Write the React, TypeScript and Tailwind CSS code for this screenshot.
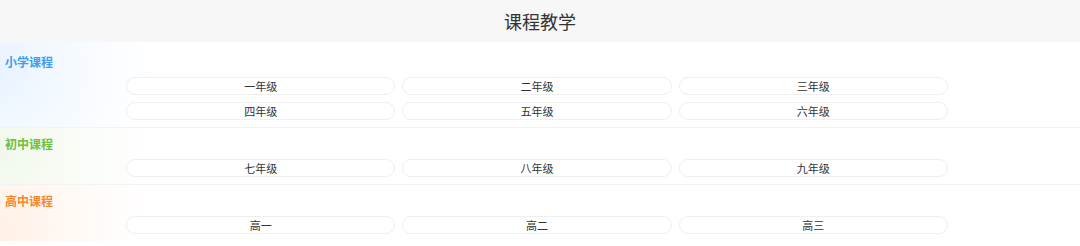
const sections = [
  {
    title: "小学课程",
    color: "text-[#3d9cf6]",
    glow: "bg-[radial-gradient(circle_at_0%_35%,#e8f3ff_0px,rgba(232,243,255,0.5)_60px,rgba(255,255,255,0)_150px)]",
    grades: ["一年级", "二年级", "三年级", "四年级", "五年级", "六年级"],
    top: "pt-[13px]",
  },
  {
    title: "初中课程",
    color: "text-[#6cbf3f]",
    glow: "bg-[radial-gradient(circle_at_0%_40%,#f0f8ea_0px,rgba(240,248,234,0.5)_60px,rgba(255,255,255,0)_150px)]",
    grades: ["七年级", "八年级", "九年级"],
    top: "pt-[9px]",
  },
  {
    title: "高中课程",
    color: "text-[#f7872a]",
    glow: "bg-[radial-gradient(circle_at_0%_80%,#fff0e5_0px,rgba(255,240,229,0.5)_60px,rgba(255,255,255,0)_150px)]",
    grades: ["高一", "高二", "高三"],
    top: "pt-[9px]",
  },
]

export default function App() {
  return (
    <div
      className="w-[1080px] h-[246px] bg-white overflow-hidden"
      style={{ fontFamily: '"Noto Sans CJK SC", "Noto Sans", sans-serif' }}
    >
      {/* Header */}
      <header className="h-[42px] bg-[#f7f7f7] flex items-center justify-center">
        <h1 className="text-[18px] text-[#333] leading-none">课程教学</h1>
      </header>

      {sections.map((s, i) => (
        <section
          key={s.title}
          className={`relative ${s.top} pb-[7px] ${i < sections.length - 1 ? "border-b border-[#f3f3f3]" : ""}`}
        >
          <div className={`absolute left-0 top-0 bottom-0 w-[240px] pointer-events-none ${s.glow}`} />
          <div className="relative">
            <h2 className={`pl-[5px] text-[12px] leading-[14px] font-bold ${s.color}`}>{s.title}</h2>
            <div className="ml-[126px] mt-[8px] w-[822px] grid grid-cols-3 gap-x-[7px] gap-y-[7px]">
              {s.grades.map((g) => (
                <div
                  key={g}
                  className="h-[18px] rounded-full border border-[#efefef] bg-white flex items-center justify-center text-[11px] text-[#333]"
                >
                  {g}
                </div>
              ))}
            </div>
          </div>
        </section>
      ))}
    </div>
  )
}
